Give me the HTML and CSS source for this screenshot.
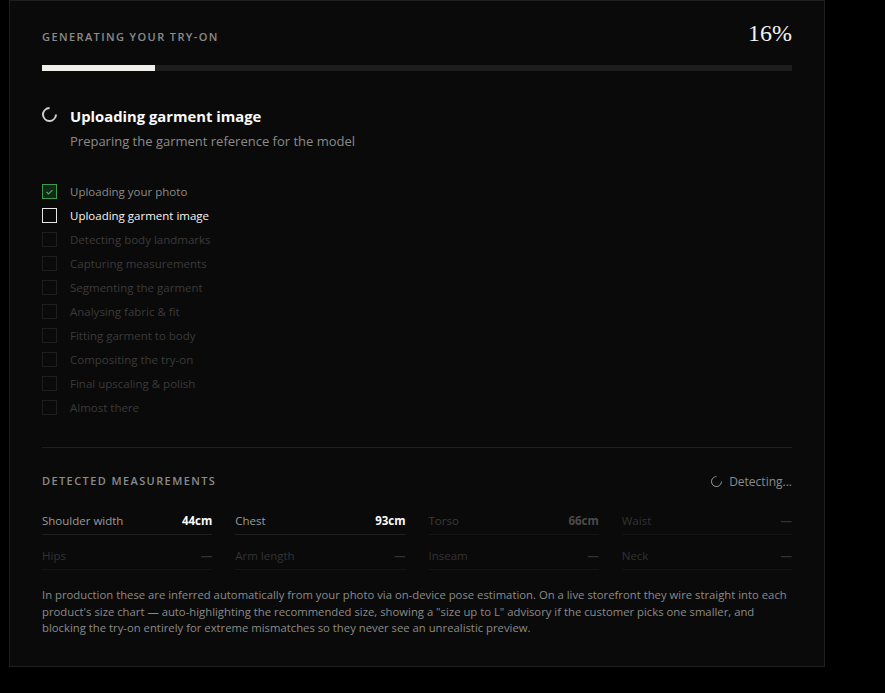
FILE: index.html
```html
<!DOCTYPE html>
<html>
<head>
<meta charset="utf-8">
<link rel="stylesheet" href="styles.css">
</head>
<body>
<div class="panel">
  <div class="head">
    <div class="eyebrow">GENERATING YOUR TRY-ON</div>
    <div class="pct">16%</div>
  </div>
  <div class="bar"><div class="fill" style="width:15.1%"></div></div>

  <div class="stage">
    <span class="spin big"></span>
    <div class="stage-text">
      <div class="stage-title">Uploading garment image</div>
      <div class="stage-sub">Preparing the garment reference for the model</div>
    </div>
  </div>

  <ul class="steps">
    <li class="step done"><span class="box"><svg viewBox="0 0 14 14" width="14" height="14"><path d="M4.2 7.3 L6.1 9.1 L9.8 5.2" fill="none" stroke="#4caf50" stroke-width="1.3" stroke-linecap="round" stroke-linejoin="round"/></svg></span>Uploading your photo</li>
    <li class="step current"><span class="box"></span>Uploading garment image</li>
    <li class="step"><span class="box"></span>Detecting body landmarks</li>
    <li class="step"><span class="box"></span>Capturing measurements</li>
    <li class="step"><span class="box"></span>Segmenting the garment</li>
    <li class="step"><span class="box"></span>Analysing fabric &amp; fit</li>
    <li class="step"><span class="box"></span>Fitting garment to body</li>
    <li class="step"><span class="box"></span>Compositing the try-on</li>
    <li class="step"><span class="box"></span>Final upscaling &amp; polish</li>
    <li class="step"><span class="box"></span>Almost there</li>
  </ul>

  <div class="divider"></div>

  <div class="meas-head">
    <div class="eyebrow">DETECTED MEASUREMENTS</div>
    <div class="detecting"><span class="spin small"></span>Detecting...</div>
  </div>

  <div class="grid">
    <div class="cell on"><span class="lbl">Shoulder width</span><span class="val">44cm</span></div>
    <div class="cell on"><span class="lbl">Chest</span><span class="val">93cm</span></div>
    <div class="cell dim"><span class="lbl">Torso</span><span class="val">66cm</span></div>
    <div class="cell"><span class="lbl">Waist</span><span class="val">—</span></div>
    <div class="cell"><span class="lbl">Hips</span><span class="val">—</span></div>
    <div class="cell"><span class="lbl">Arm length</span><span class="val">—</span></div>
    <div class="cell"><span class="lbl">Inseam</span><span class="val">—</span></div>
    <div class="cell"><span class="lbl">Neck</span><span class="val">—</span></div>
  </div>

  <p class="note">In production these are inferred automatically from your photo via on-device pose estimation. On a live storefront they wire straight into each product's size chart — auto-highlighting the recommended size, showing a "size up to L" advisory if the customer picks one smaller, and blocking the try-on entirely for extreme mismatches so they never see an unrealistic preview.</p>
</div>
</body>
</html>
```
FILE: styles.css
```css
* { box-sizing: border-box; }
html, body { margin: 0; padding: 0; background: #000; }
body {
  font-family: "Open Sans", "Noto Sans", sans-serif;
  color: #9a9a9a;
}
.panel {
  width: 816px;
  margin-left: 9px;
  background: #0a0a0a;
  border: 1px solid #1f1f1f;
  padding: 24px 32px 24px 32px;
  min-height: 667px;
}
.head {
  display: flex;
  justify-content: space-between;
  align-items: center;
  height: 26px;
}
.eyebrow {
  font-size: 11px;
  letter-spacing: 1.4px;
  color: #8a8a8a;
  font-weight: 600;
  line-height: 16px;
}
.head .eyebrow { margin-top: -2px; }
.pct {
  font-family: "Liberation Serif", "Times New Roman", serif;
  font-size: 24px;
  color: #f2f2f2;
  line-height: 26px;
  align-self: flex-start;
  margin-top: -5px;
}
.bar {
  margin-top: 14px;
  height: 6px;
  background: #1e1e1e;
}
.fill { height: 100%; background: #f0efea; }

.stage {
  display: flex;
  gap: 13px;
  margin-top: 35px;
}
.spin {
  display: inline-block;
  border-radius: 50%;
  border-style: solid;
  border-color: #cfcfcf;
  border-top-color: transparent;
  transform: rotate(45deg);
  flex: none;
}
.spin.big { width: 15px; height: 15px; border-width: 2px; margin-top: 1px; }
.stage-title { font-size: 14.8px; font-weight: 700; color: #fafafa; line-height: 20px; }
.stage-sub { font-size: 13px; color: #8a8a8a; margin-top: 6px; line-height: 18px; }

.steps { list-style: none; margin: 29px 0 0; padding: 0; }
.step {
  display: flex;
  align-items: center;
  height: 24px;
  font-size: 11.5px;
  color: #3a3a3a;
}
.box {
  width: 15px; height: 15px;
  border: 1px solid #1e1e1e;
  margin-right: 13px;
  flex: none;
  display: flex;
}
.step.done { color: #8a8a8a; }
.step.done .box { border-color: #3f9b4a; background: #12281a; }
.step.current { color: #f5f5f5; }
.step.current .box { border-color: #e6e6e6; }

.divider { height: 1px; background: #1f1f1f; margin-top: 28px; }

.meas-head {
  display: flex;
  justify-content: space-between;
  align-items: center;
  margin-top: 24px;
  height: 18px;
}
.detecting { font-size: 12px; color: #8a8a8a; display: flex; align-items: center; gap: 7px; }
.spin.small { width: 11px; height: 11px; border-width: 1.5px; border-color: #8a8a8a; border-top-color: transparent; }

.grid {
  display: grid;
  grid-template-columns: repeat(4, 1fr);
  column-gap: 23px;
  margin-top: 10px;
}
.cell {
  display: flex;
  justify-content: space-between;
  align-items: flex-start;
  height: 35px;
  padding-top: 13px;
  border-bottom: 1px solid #141414;
  font-size: 11.5px;
  line-height: 16px;
  color: #333;
}
.cell .val { font-weight: 700; }
.cell.on { border-bottom-color: #1f1f1f; }
.cell.on .lbl { color: #9a9a9a; }
.cell.on .val { color: #fafafa; }
.cell.dim .lbl { color: #3a3a3a; }
.cell.dim .val { color: #4a4a4a; }

.note {
  margin: 17px 0 0;
  font-size: 11.3px;
  line-height: 16.5px;
  color: #8a8a8a;
}
```
